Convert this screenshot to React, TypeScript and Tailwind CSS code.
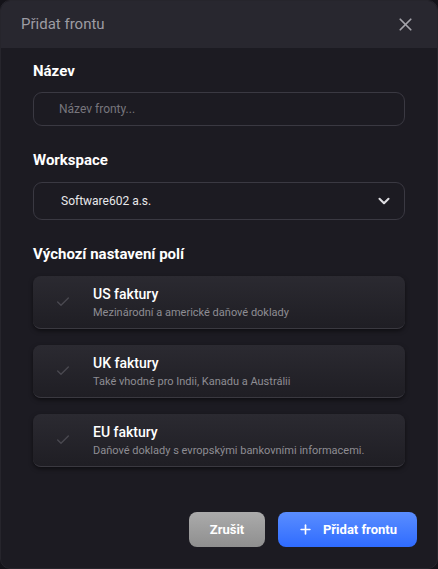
import { X, ChevronDown, Check, Plus } from "lucide-react";

const presets = [
  { title: "US faktury", desc: "Mezinárodní a americké daňové doklady" },
  { title: "UK faktury", desc: "Také vhodné pro Indii, Kanadu a Austrálii" },
  { title: "EU faktury", desc: "Daňové doklady s evropskými bankovními informacemi." },
];

export default function App() {
  return (
    <div className="w-[438px] h-[569px] bg-[#141319] font-['Roboto',sans-serif]">
      <div className="h-full flex flex-col rounded-[10px] overflow-hidden bg-[#1c1b22] border border-[#26252c]">
        <div className="h-[47px] shrink-0 bg-[#28272f] flex items-center justify-between pl-[20px] pr-[21px]">
          <span className="text-[15px] text-[#9d9ca3]">Přidat frontu</span>
          <X className="w-[21px] h-[21px] text-[#a4a3aa]" strokeWidth={2} />
        </div>

        <div className="flex-1 flex flex-col px-[32px] pt-[13px]">
          <label className="text-[15px] font-bold text-white leading-[20px]">Název</label>
          <div className="mt-[11px] h-[34px] rounded-[9px] border border-[#3a3942] flex items-center pl-[25px]">
            <span className="text-[12px] text-[#77767d]">Název fronty...</span>
          </div>

          <label className="mt-[24px] text-[15px] font-bold text-white leading-[20px]">Workspace</label>
          <div className="mt-[12px] h-[38px] rounded-[9px] border border-[#3a3942] flex items-center justify-between pl-[27px] pr-[11px]">
            <span className="text-[12px] text-[#e8e8ea]">Software602 a.s.</span>
            <ChevronDown className="w-[18px] h-[18px] text-[#dcdce0]" strokeWidth={2.8} />
          </div>

          <label className="mt-[24px] text-[15px] font-bold text-white leading-[20px]">Výchozí nastavení polí</label>
          <div className="mt-[12px] flex flex-col gap-[16px]">
            {presets.map((p) => (
              <div
                key={p.title}
                className="h-[53px] rounded-[8px] bg-gradient-to-b from-[#2b2a31] to-[#1f1e24] shadow-[0_2px_4px_rgba(0,0,0,0.5)] border-b border-[#3a3940] flex items-center"
              >
                <div className="w-[60px] flex justify-center">
                  <Check className="w-[16px] h-[16px] text-[#4a4950]" strokeWidth={2} />
                </div>
                <div className="flex flex-col">
                  <span className="text-[14px] font-medium text-white leading-[18px]">{p.title}</span>
                  <span className="text-[11px] text-[#8e8d93] leading-[15px] mt-[2px]">{p.desc}</span>
                </div>
              </div>
            ))}
          </div>
        </div>

        <div className="flex justify-end gap-[13px] pr-[20px] pb-[21px]">
          <button className="w-[76px] h-[35px] rounded-[8px] bg-gradient-to-b from-[#ababab] to-[#8f8f8f] text-white text-[13px] font-bold">
            Zrušit
          </button>
          <button className="w-[139px] h-[35px] rounded-[8px] bg-gradient-to-b from-[#5a8dff] to-[#2f6bff] text-white text-[13px] font-bold flex items-center justify-center gap-[10px]">
            <Plus className="w-[15px] h-[15px]" strokeWidth={2.6} />
            Přidat frontu
          </button>
        </div>
      </div>
    </div>
  );
}
